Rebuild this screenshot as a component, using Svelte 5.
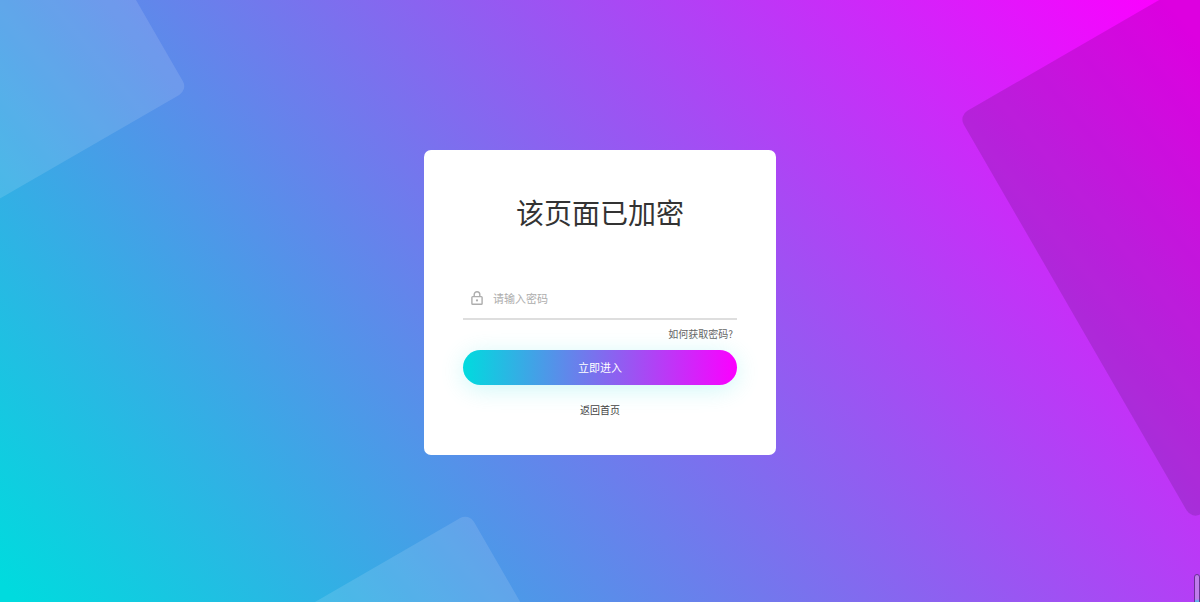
<script>
	let password = '';

	function enter() {
		console.log(password);
	}
</script>

<main class="page">
	<span class="square square-left"></span>
	<span class="square square-right"></span>
	<span class="square square-bottom"></span>

	<form class="card" on:submit|preventDefault={enter}>
		<h1>该页面已加密</h1>

		<div class="field">
			<label for="password" aria-label="密码">
				<svg viewBox="0 0 12 14" width="12" height="14">
					<rect x="0.9" y="5.6" width="10.2" height="7.7" rx="0.8" />
					<path d="M3.2 5.6V3.5a2.8 2.8 0 0 1 5.6 0V5.6" />
					<circle cx="6" cy="9.4" r="1.1" />
				</svg>
			</label>
			<input id="password" type="password" placeholder="请输入密码" bind:value={password} />
		</div>

		<a class="help" href="/help">如何获取密码?</a>
		<button type="submit">立即进入</button>
		<a class="home" href="/">返回首页</a>
	</form>

	<span class="scroll"></span>
</main>

<style>
	:global(body) {
		margin: 0;
	}

	.page {
		position: relative;
		display: flex;
		justify-content: center;
		align-items: center;
		box-sizing: border-box;
		min-height: 100vh;
		padding-top: 2px;
		overflow: hidden;
		background: linear-gradient(50deg, #00dbde 1%, #fc00ff 98%);
		font-family: "Noto Sans CJK SC", sans-serif;
	}

	.square {
		position: absolute;
		width: 300px;
		height: 300px;
		border-radius: 10px;
		transform: rotate(-30deg);
		background: rgba(255, 255, 255, 0.12);
	}

	.square-left {
		top: -115px;
		left: -167px;
	}

	.square-right {
		top: -32px;
		right: -310px;
		width: 466px;
		height: 466px;
		background: rgba(0, 0, 0, 0.12);
	}

	.square-bottom {
		bottom: -266px;
		left: 264px;
	}

	.card {
		position: relative;
		display: flex;
		flex-direction: column;
		box-sizing: border-box;
		width: 352px;
		padding: 41px 39px 37px;
		border-radius: 7px;
		background: #fff;
	}

	h1 {
		margin: 0 0 46px;
		font-size: 28px;
		font-weight: 400;
		line-height: 42px;
		text-align: center;
		color: #333;
	}

	.field {
		display: flex;
		align-items: center;
		height: 39px;
		padding-left: 8px;
		border-bottom: 2px solid #dedede;
	}

	label {
		display: flex;
	}

	svg {
		fill: none;
		stroke: #adadad;
		stroke-width: 1.4;
	}

	circle {
		fill: #adadad;
		stroke: none;
	}

	input {
		flex: 1;
		min-width: 0;
		padding: 0 10px;
		border: 0;
		outline: 0;
		background: none;
		font-family: inherit;
		font-size: 11px;
		color: #333;
	}

	input::placeholder {
		color: #adadad;
		opacity: 1;
	}

	a {
		font-size: 10px;
		line-height: 16px;
		text-decoration: none;
	}

	.help {
		align-self: flex-end;
		margin: 6px 4px 8px;
		color: #666;
	}

	.home {
		align-self: center;
		margin-top: 17px;
		color: #444;
	}

	button {
		height: 35px;
		border: 0;
		border-radius: 18px;
		background: linear-gradient(to right, #00dbde, #fc00ff);
		box-shadow: 0 4px 24px rgba(0, 219, 222, 0.2);
		font-family: inherit;
		font-size: 11px;
		color: #fff;
		cursor: pointer;
	}

	.scroll {
		position: absolute;
		right: 0;
		bottom: -4px;
		box-sizing: border-box;
		width: 6px;
		height: 32px;
		border: 1px solid #6a3295;
		border-radius: 3px;
		background: linear-gradient(#c07cec 24px, #5eb4ee 26px);
	}
</style>
